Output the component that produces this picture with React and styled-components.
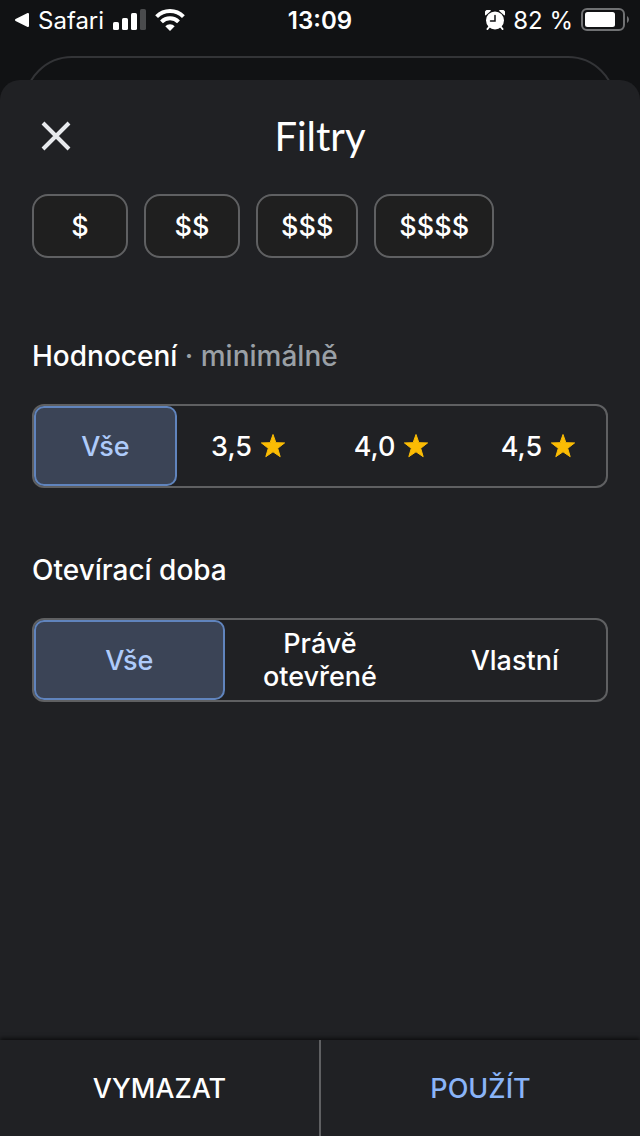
import React, { useState } from "react";
import styled, { createGlobalStyle } from "styled-components";

const prices = ["$", "$$", "$$$", "$$$$"];

const ratings = [
  { label: "Vše", value: "all" },
  { label: "3,5", value: "3.5", star: true },
  { label: "4,0", value: "4.0", star: true },
  { label: "4,5", value: "4.5", star: true },
];

const hours = [
  { label: "Vše", value: "all" },
  { label: "Právě otevřené", value: "open" },
  { label: "Vlastní", value: "custom" },
];

function StatusBar() {
  return (
    <Status>
      <StatusGroup>
        <BackLink href="#safari">
          <svg width="18" height="16" viewBox="-3 0 18 16">
            <path d="M2 8 14 2v12z" fill="#fff" stroke="#fff" strokeWidth="2" strokeLinejoin="round" />
          </svg>
          Safari
        </BackLink>
        <svg width="33" height="22" viewBox="0 0 33 22" fill="#fff">
          <rect x="0" y="13" width="6" height="8" rx="1.6" />
          <rect x="9" y="9" width="6" height="12" rx="1.6" />
          <rect x="18" y="4" width="6" height="17" rx="1.6" />
          <rect x="27" y="0" width="6" height="21" rx="1.6" fill="#4a4b4d" />
        </svg>
        <svg width="30" height="22" viewBox="0 0 30 22" fill="none" stroke="#fff" strokeWidth="4">
          <path d="M1.6 7.6a19 19 0 0 1 26.8 0" />
          <path d="M6.5 12.8a12 12 0 0 1 17 0" />
          <path d="M15 22l-4.7-4.7a6.6 6.6 0 0 1 9.4 0z" fill="#fff" stroke="none" />
        </svg>
      </StatusGroup>
      <Clock>13:09</Clock>
      <StatusGroup $end>
        <svg width="20" height="20" viewBox="0 0 20 20">
          <path d="M4.5 16.5 2.5 19M15.5 16.5 17.5 19" stroke="#fff" strokeWidth="2" strokeLinecap="round" />
          <circle cx="10" cy="10.4" r="9" fill="#fff" />
          <path d="M.6 5.6A3.4 3.4 0 0 1 6 .8zM19.4 5.6A3.4 3.4 0 0 0 14 .8z" fill="#fff" />
          <path d="M10 5.5v5.5H5.5" fill="none" stroke="#111214" strokeWidth="1.5" strokeLinecap="round" />
        </svg>
        <span>82 %</span>
        <svg width="48" height="24" viewBox="0 0 48 24">
          <rect x="1" y="1" width="42" height="21" rx="5" fill="none" stroke="#707173" strokeWidth="2" />
          <rect x="4" y="4" width="30" height="15" rx="2.5" fill="#fff" />
          <path d="M46 8c2.6 1.4 2.6 5.6 0 7z" fill="#707173" />
        </svg>
      </StatusGroup>
    </Status>
  );
}

function Segmented({ labelledBy, options, value, onChange }) {
  return (
    <SegmentGroup role="group" aria-labelledby={labelledBy}>
      {options.map((option) => (
        <Segment
          key={option.value}
          type="button"
          aria-pressed={option.value === value}
          $active={option.value === value}
          onClick={() => onChange(option.value)}
        >
          {option.label}
          {option.star && (
            <svg width="26" height="26" viewBox="0 0 26 26" aria-hidden="true">
              <path
                d="M13 1.5 15.9 9.7 24.6 9.9 17.7 15.3 20.2 23.7 13 18.8 5.8 23.7 8.3 15.3 1.4 9.9 10.1 9.7z"
                fill="#fbbc04"
                stroke="#fbbc04"
                strokeWidth="1"
                strokeLinejoin="round"
              />
            </svg>
          )}
        </Segment>
      ))}
    </SegmentGroup>
  );
}

export default function App() {
  const [selectedPrices, setSelectedPrices] = useState([]);
  const [rating, setRating] = useState("all");
  const [open, setOpen] = useState("all");

  const togglePrice = (price) => {
    setSelectedPrices((prev) =>
      prev.includes(price) ? prev.filter((p) => p !== price) : [...prev, price]
    );
  };

  const clearFilters = () => {
    setSelectedPrices([]);
    setRating("all");
    setOpen("all");
  };

  return (
    <>
      <GlobalStyle />
      <Page>
        <StatusBar />
        <Backdrop>
          <SearchOutline />
        </Backdrop>
        <Sheet>
          <Header>
            <CloseButton type="button" aria-label="Zavřít">
              <svg width="30" height="30" viewBox="0 0 30 30" stroke="#e8eaed" strokeWidth="4">
                <path d="M2 2l26 26M28 2 2 28" />
              </svg>
            </CloseButton>
            <Title>Filtry</Title>
          </Header>

          <Content>
            <Chips>
              {prices.map((price) => (
                <Chip
                  key={price}
                  type="button"
                  aria-pressed={selectedPrices.includes(price)}
                  $active={selectedPrices.includes(price)}
                  onClick={() => togglePrice(price)}
                >
                  {price}
                </Chip>
              ))}
            </Chips>

            <Section>
              <SectionTitle id="rating-title">
                Hodnocení <span>· minimálně</span>
              </SectionTitle>
              <Segmented labelledBy="rating-title" options={ratings} value={rating} onChange={setRating} />
            </Section>

            <Section>
              <SectionTitle id="hours-title">Otevírací doba</SectionTitle>
              <Segmented labelledBy="hours-title" options={hours} value={open} onChange={setOpen} />
            </Section>
          </Content>

          <Footer>
            <FooterButton type="button" onClick={clearFilters}>VYMAZAT</FooterButton>
            <FooterButton type="button" $primary>POUŽÍT</FooterButton>
          </Footer>
        </Sheet>
      </Page>
    </>
  );
}

const GlobalStyle = createGlobalStyle`
  * {
    box-sizing: border-box;
  }

  body {
    margin: 0;
    background-color: #111214;
    color: #fff;
    font-family: Inter, "Liberation Sans", sans-serif;
  }

  button {
    font-family: inherit;
    color: inherit;
    cursor: pointer;
  }

  svg {
    flex-shrink: 0;
  }
`;

const Page = styled.div`
  min-height: 100vh;
  display: flex;
  flex-direction: column;
`;

const Status = styled.div`
  display: grid;
  grid-template-columns: 1fr auto 1fr;
  align-items: center;
  height: 40px;
  padding: 0 11px;
  font-size: 24px;
`;

const StatusGroup = styled.div`
  display: flex;
  align-items: center;
  gap: ${({ $end }) => ($end ? "8px" : "9px")};
  justify-content: ${({ $end }) => ($end ? "flex-end" : "flex-start")};
`;

const BackLink = styled.a`
  display: flex;
  align-items: center;
  gap: 9px;
  color: inherit;
  text-decoration: none;
`;

const Clock = styled.div`
  font-weight: 600;
`;

/* The search field of the map stays visible above the sheet */
const Backdrop = styled.div`
  height: 40px;
  padding: 16px 24px 0;
  overflow: hidden;
`;

const SearchOutline = styled.div`
  height: 96px;
  border: 2px solid #333437;
  border-radius: 48px;
`;

const Sheet = styled.main`
  flex: 1;
  display: flex;
  flex-direction: column;
  background-color: #202124;
  border-radius: 20px 20px 0 0;
`;

const Header = styled.header`
  display: grid;
  grid-template-columns: 48px 1fr 48px;
  align-items: center;
  padding: 28px 32px 30px;
`;

const CloseButton = styled.button`
  display: flex;
  align-items: center;
  justify-content: center;
  height: 48px;
  padding: 0;
  border: none;
  background: none;
`;

const Title = styled.h1`
  margin: 0;
  text-align: center;
  font-family: Lato, Inter, sans-serif;
  font-size: 40px;
  line-height: 56px;
  font-weight: 400;
`;

const Content = styled.div`
  flex: 1;
  padding: 0 32px 32px;
`;

const Chips = styled.div`
  display: flex;
  gap: 16px;
  margin-bottom: 80px;
`;

const Chip = styled.button`
  min-width: 96px;
  height: 64px;
  padding: 0 23px;
  border: 2px solid ${({ $active }) => ($active ? "#6689c3" : "#5f6062")};
  border-radius: 16px;
  background-color: ${({ $active }) => ($active ? "#3b4456" : "#1f1f1f")};
  font-size: 27px;
  font-weight: 500;
`;

const Section = styled.section`
  margin-bottom: 64px;
`;

const SectionTitle = styled.h2`
  margin: 0 0 30px;
  font-size: 28px;
  line-height: 36px;
  font-weight: 500;

  span {
    color: #9aa0a6;
  }
`;

const SegmentGroup = styled.div`
  display: grid;
  grid-auto-flow: column;
  grid-auto-columns: minmax(0, 1fr);
  height: 84px;
  border: 2px solid #5f6062;
  border-radius: 12px;
`;

const Segment = styled.button`
  display: flex;
  align-items: center;
  justify-content: center;
  gap: 8px;
  padding: 0 8px;
  border: 2px solid ${({ $active }) => ($active ? "#6084bd" : "transparent")};
  border-radius: 10px;
  background-color: ${({ $active }) => ($active ? "#3b4456" : "transparent")};
  color: ${({ $active }) => ($active ? "#aecbfa" : "#fff")};
  font-size: 27px;
  line-height: 33px;
  font-weight: 500;

  &:last-child {
    padding-left: 16px;
  }
`;

const Footer = styled.footer`
  display: flex;
  height: 96px;
  box-shadow: 0 -2px 4px rgba(0, 0, 0, 0.6);
`;

const FooterButton = styled.button`
  flex: 1;
  border: none;
  background-color: #202124;
  color: ${({ $primary }) => ($primary ? "#8ab4f8" : "#fff")};
  font-size: 27px;
  font-weight: 500;

  & + & {
    border-left: 2px solid #5f6062;
  }
`;
